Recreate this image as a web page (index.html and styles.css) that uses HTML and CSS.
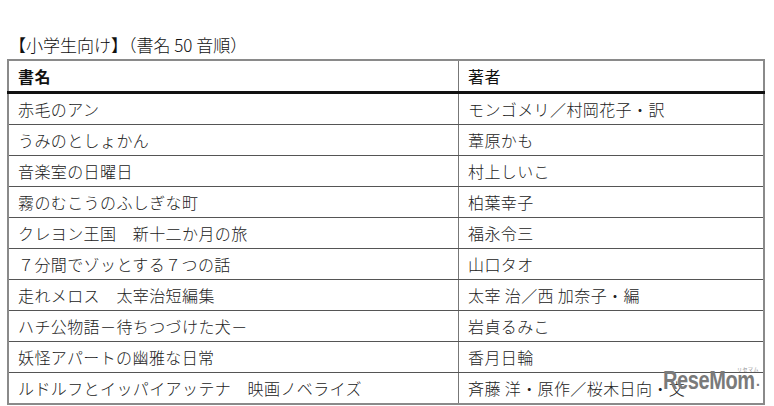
FILE: index.html
```html
<!DOCTYPE html>
<html lang="ja">
<head>
<meta charset="utf-8">
<link rel="stylesheet" href="styles.css">
</head>
<body>
<div class="page">
  <div class="title">【小学生向け】（書名 50 音順）</div>
  <table class="books">
    <thead>
      <tr><th class="c1">書名</th><th class="c2">著者</th></tr>
    </thead>
    <tbody>
      <tr><td>赤毛のアン</td><td>モンゴメリ／村岡花子・訳</td></tr>
      <tr><td>うみのとしょかん</td><td>葦原かも</td></tr>
      <tr><td>音楽室の日曜日</td><td>村上しいこ</td></tr>
      <tr><td>霧のむこうのふしぎな町</td><td>柏葉幸子</td></tr>
      <tr><td>クレヨン王国　新十二か月の旅</td><td>福永令三</td></tr>
      <tr><td>７分間でゾッとする７つの話</td><td>山口タオ</td></tr>
      <tr><td>走れメロス　太宰治短編集</td><td>太宰 治／西 加奈子・編</td></tr>
      <tr><td>ハチ公物語－待ちつづけた犬－</td><td>岩貞るみこ</td></tr>
      <tr><td>妖怪アパートの幽雅な日常</td><td>香月日輪</td></tr>
      <tr><td>ルドルフとイッパイアッテナ　映画ノベライズ</td><td>斉藤 洋・原作／桜木日向・文</td></tr>
    </tbody>
  </table>
  <div class="logo"><span class="logo-kana">リセマム</span><span class="logo-word">ReseMom</span><span class="logo-dot">.</span></div>
</div>
</body>
</html>
```

FILE: styles.css
```css
html, body {
  margin: 0;
  padding: 0;
  background: #ffffff;
}
.page {
  position: relative;
  width: 774px;
  height: 406px;
  padding-top: 33px;
  box-sizing: border-box;
  font-family: "Noto Sans CJK JP", "Noto Sans", sans-serif;
  color: #222;
  overflow: hidden;
}
.title {
  margin-left: 9px;
  font-size: 17px;
  line-height: 24px;
  height: 26px;
  font-weight: 300;
  color: #111;
}
.books {
  margin-left: 7px;
  width: 758px;
  border-collapse: collapse;
  border: 2px solid #8a8a8a;
  table-layout: fixed;
}
.books th, .books td {
  text-align: left;
  padding: 0 0 0 9px;
  font-size: 16px;
  letter-spacing: 0.4px;
  height: 30px;
  line-height: 30px;
  white-space: nowrap;
  overflow: hidden;
  border-left: 1px solid #777;
  border-bottom: 1px solid #555;
  font-weight: 300;
  color: #222;
}
.books th {
  height: 30px;
  font-weight: 700;
  color: #111;
  border-bottom: 3px solid #111;
}
.books th.c1 { width: 440px; }
.books th.c2 { color: #111; font-weight: 400; }
.logo {
  position: absolute;
  left: 663px;
  top: 366px;
  width: 102px;
  height: 28px;
  font-family: "Liberation Sans", Arial, sans-serif;
  font-weight: 700;
  color: #7a7a7a;
  white-space: nowrap;
}
.logo-word {
  display: inline-block;
  font-size: 25px;
  line-height: 28px;
  letter-spacing: -0.5px;
  transform: scaleX(0.8);
  transform-origin: left center;
}
.logo-kana {
  position: absolute;
  right: 6px;
  top: 0;
  font-family: "Noto Sans CJK JP", sans-serif;
  font-size: 5px;
  line-height: 6px;
  font-weight: 400;
  letter-spacing: 0.5px;
  color: #888;
}
.logo-dot {
  position: absolute;
  left: 93px;
  top: 0;
  font-size: 14px;
  line-height: 30px;
}
```
